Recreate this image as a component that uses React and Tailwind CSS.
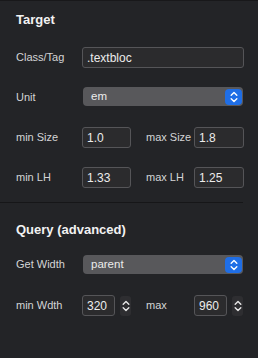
import { useState } from 'react';

const font = { fontFamily: '"Liberation Sans", Arial, sans-serif' };

function Label({ children, w = 'w-[66px]' }) {
  return <span className={`${w} shrink-0 text-[11px] text-[#d4d4d6]`}>{children}</span>;
}

function TextBox({ value, className = '' }) {
  return (
    <div
      className={`h-[21px] flex items-center px-[4px] bg-[#2b2b2d] border border-[#555558] rounded-[3px] text-[12px] text-[#ececec] ${className}`}
    >
      {value}
    </div>
  );
}

function Chevrons({ className = 'text-white' }) {
  return (
    <svg width="8" height="12" viewBox="0 0 8 12" fill="none" className={className}>
      <path d="M1.2 4.2L4 1.5l2.8 2.7M1.2 7.8L4 10.5l2.8-2.7" stroke="currentColor" strokeWidth="1.4" strokeLinecap="round" strokeLinejoin="round" />
    </svg>
  );
}

function Select({ value }) {
  return (
    <div className="flex-1 h-[19px] ml-[1px] mr-[1px] flex items-center justify-between pl-[8px] pr-[1px] bg-[#58585b] rounded-[4px] text-[11.5px] text-[#ececec]">
      <span>{value}</span>
      <div className="w-[17px] h-[16px] rounded-[4px] bg-[#1f6ee6] flex items-center justify-center">
        <Chevrons />
      </div>
    </div>
  );
}

function Stepper() {
  return (
    <div className="w-[11px] h-[20px] ml-[5px] rounded-[3px] bg-[#2e2e31] flex items-center justify-center">
      <Chevrons className="text-[#e8e8e8]" />
    </div>
  );
}

export default function App() {
  const [unit] = useState('em');

  return (
    <div className="w-[258px] h-[358px] bg-[#232427] border-t border-[#18181a] overflow-hidden" style={font}>
      {/* Target */}
      <div className="pl-4 pr-[14px]">
        <h2 className="mt-[11px] h-4 leading-4 text-[13px] font-bold text-[#f2f2f2]">Target</h2>
        <div className="mt-[19px] flex flex-col gap-[19px]">
          <div className="flex items-center h-[21px]">
            <Label>Class/Tag</Label>
            <TextBox value=".textbloc" className="flex-1 text-[12.5px]" />
          </div>
          <div className="flex items-start h-[21px]">
            <span className="w-[66px] shrink-0 self-center text-[11px] text-[#d4d4d6]">Unit</span>
            <Select value={unit} />
          </div>
          <div className="flex items-center h-[21px]">
            <Label>min Size</Label>
            <TextBox value="1.0" className="w-[49px]" />
            <span className="ml-[15px] w-[48px] shrink-0 text-[11px] text-[#d4d4d6]">max Size</span>
            <TextBox value="1.8" className="flex-1" />
          </div>
          <div className="flex items-center h-[21px]">
            <Label>min LH</Label>
            <TextBox value="1.33" className="w-[49px]" />
            <span className="ml-[15px] w-[48px] shrink-0 text-[11px] text-[#d4d4d6]">max LH</span>
            <TextBox value="1.25" className="flex-1" />
          </div>
        </div>
      </div>

      <div className="mt-[14px] mr-[15px] h-px bg-[#161618]" />

      {/* Query */}
      <div className="pl-4 pr-[14px]">
        <h2 className="mt-[19px] h-4 leading-4 text-[13px] font-bold text-[#f2f2f2]">Query (advanced)</h2>
        <div className="mt-[17px] flex items-center h-[19px]">
          <Label>Get Width</Label>
          <Select value="parent" />
        </div>
        <div className="mt-[21px] flex items-center h-[21px]">
          <Label>min Wdth</Label>
          <TextBox value="320" className="w-[33px]" />
          <Stepper />
          <span className="ml-[15px] w-[48px] shrink-0 text-[11px] text-[#d4d4d6]">max</span>
          <TextBox value="960" className="w-[33px]" />
          <Stepper />
        </div>
      </div>
    </div>
  );
}
